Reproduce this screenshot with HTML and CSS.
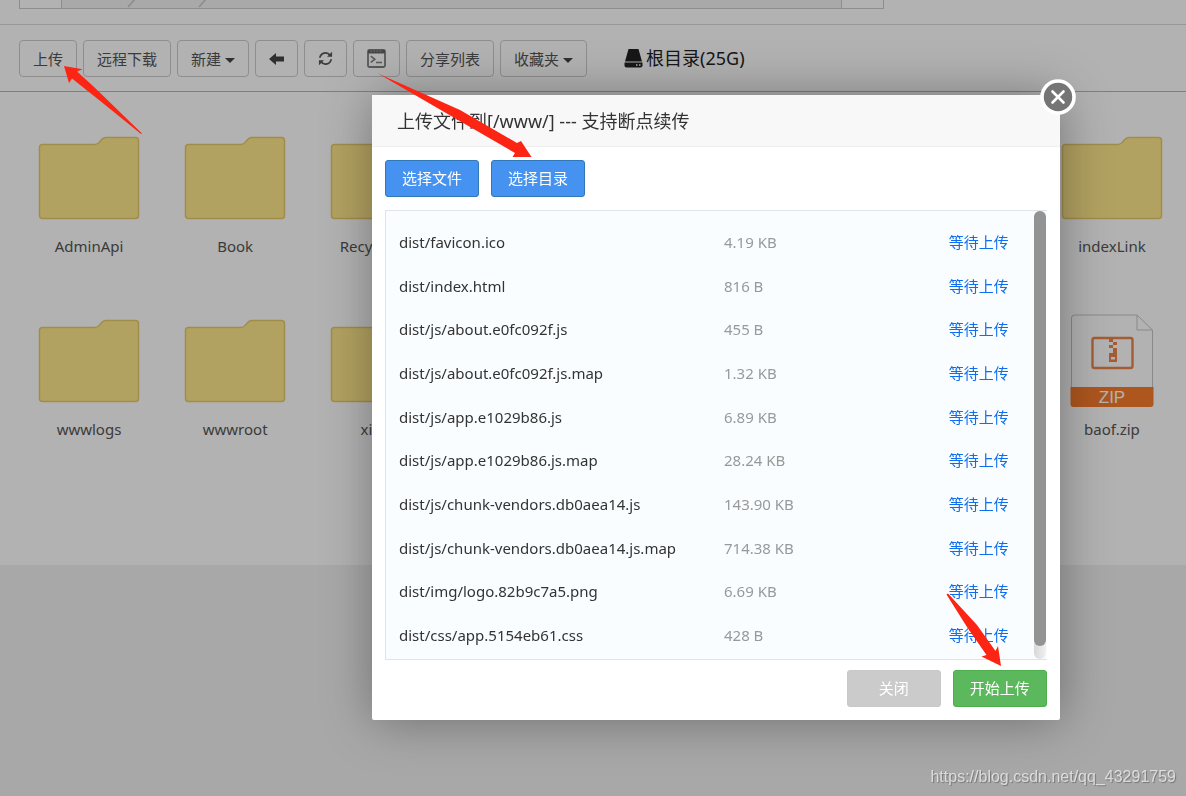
FILE: index.html
```html
<!DOCTYPE html>
<html lang="zh-CN">
<head>
<meta charset="utf-8">
<title>文件管理</title>
<link rel="stylesheet" href="styles.css">
</head>
<body>
<svg class="defs" aria-hidden="true">
  <symbol id="folder" viewBox="0 0 102 84">
    <path d="M4.500 8.500H57c3 0 3.500-1 5-3 2-2.800 3-4 6-4h29.500q3 0 3 3v75q0 3-3 3h-93q-3 0-3-3v-68q0-3 3-3z" fill="#ffe98c" stroke="#e6ca6a" stroke-width="1.500"/>
  </symbol>
</svg>
<main class="page">
  <div class="pathbar">
    <div class="path">
      <span class="path-end"></span>
      <span class="path-mid">
        <svg width="160" height="8" viewBox="0 0 160 8"><path d="M73 -1L66 7M144 -1L137 7" stroke="#c8c8c8" stroke-width="1.500" fill="none"/></svg>
      </span>
      <span class="path-end"></span>
    </div>
  </div>
  <div class="toolbar">
    <button class="tool">上传</button>
    <button class="tool">远程下载</button>
    <button class="tool">新建<i class="caret"></i></button>
    <button class="tool" aria-label="后退"><svg width="15" height="14" viewBox="0 0 15 14"><path d="M0 7l7-6V4.500h8v5H7V13z" fill="#444"/></svg></button>
    <button class="tool" aria-label="刷新"><svg width="15" height="15" viewBox="0 0 16 16"><g fill="none" stroke="#555" stroke-width="1.900"><path d="M2 7.200A6 6 0 0 1 12.800 4.500"/><path d="M14 8.800A6 6 0 0 1 3.200 11.500"/></g><path d="M15 .8v5.400H9.600zM1 15.200V9.800h5.400z" fill="#555"/></svg></button>
    <button class="tool" aria-label="终端"><svg width="19" height="19" viewBox="0 0 19 19"><rect x="1" y="1" width="17" height="17" rx="1.500" fill="none" stroke="#808080" stroke-width="1.800"/><path d="M1 1h17v3.500H1z" fill="#666"/><path d="M3.500 2h1.500M6.500 2H8M9.500 2H11M12.500 2H14" stroke="#aaa"/><path d="M3.800 7.200l4 3.100-4 3.100M9 13.500h6" fill="none" stroke="#808080" stroke-width="1.600"/></svg></button>
    <button class="tool">分享列表</button>
    <button class="tool">收藏夹<i class="caret"></i></button>
    <div class="disk">
      <svg width="19" height="19" viewBox="0 0 19 19"><path d="M4.500 0h10l3.500 12.500H1z" fill="#222"/><path d="M.5 13.500h18v3q0 2-2 2h-14q-2 0-2-2z" fill="#222"/><path d="M12 16h1.500M15 16h1.500" stroke="#fff" stroke-width="1.500"/></svg>
      <span>根目录(25G)</span>
    </div>
  </div>
  <div class="files">
    <div class="file"><div class="thumb"><svg width="102" height="84"><use href="#folder"/></svg></div><div class="caption">AdminApi</div></div>
    <div class="file"><div class="thumb"><svg width="102" height="84"><use href="#folder"/></svg></div><div class="caption">Book</div></div>
    <div class="file partial"><div class="thumb"><svg width="102" height="84"><use href="#folder"/></svg></div><div class="caption">Recy</div></div>
    <div class="file last"><div class="thumb"><svg width="102" height="84"><use href="#folder"/></svg></div><div class="caption">indexLink</div></div>
    <div class="file"><div class="thumb"><svg width="102" height="84"><use href="#folder"/></svg></div><div class="caption">wwwlogs</div></div>
    <div class="file"><div class="thumb"><svg width="102" height="84"><use href="#folder"/></svg></div><div class="caption">wwwroot</div></div>
    <div class="file partial"><div class="thumb"><svg width="102" height="84"><use href="#folder"/></svg></div><div class="caption">xi</div></div>
    <div class="file last"><div class="thumb">
      <svg width="84" height="94" viewBox="0 0 84 94">
        <path d="M1.500 74V4q0-3 3-3H67l15.500 15v58z" fill="#fff" stroke="#c4c4c4"/>
        <path d="M67 1v15h15.500" fill="none" stroke="#c4c4c4"/>
        <path d="M.5 73h83v17q0 3-3 3h-77q-3 0-3-3z" fill="#f87c2c"/>
        <rect x="22.500" y="24" width="40" height="30" rx="2" fill="none" stroke="#ec8448" stroke-width="2.400"/>
        <path d="M39 25h4v3h-4zM43 28h4v3h-4zM39 31h4v3h-4zM43 34h4v3h-4zM39 39h4v-2h4v11h-8z" fill="#ec8448"/>
        <path d="M41 43h4v2.500h-4z" fill="#fff"/>
        <text x="42" y="89" text-anchor="middle" class="zip-label">ZIP</text>
      </svg></div><div class="caption">baof.zip</div></div>
  </div>
</main>
<div class="shade"></div>
<section class="dialog" role="dialog" aria-labelledby="dlg-title">
  <header class="dialog-head"><h1 id="dlg-title">上传文件到[/www/] --- 支持断点续传</h1></header>
  <button class="close" aria-label="关闭窗口"><svg width="36" height="36" viewBox="0 0 36 36"><circle cx="18" cy="18" r="16" fill="#757575" stroke="#fff" stroke-width="3.600"/><path d="M12.500 12.500l11 11M23.500 12.500l-11 11" stroke="#fff" stroke-width="2.600" stroke-linecap="round"/></svg></button>
  <div class="dialog-body">
    <div class="pick"><button class="btn primary">选择文件</button><button class="btn primary">选择目录</button></div>
    <div class="list">
      <table class="uploads">
        <tr><td>dist/favicon.ico</td><td class="size">4.19 KB</td><td class="state">等待上传</td></tr>
        <tr><td>dist/index.html</td><td class="size">816 B</td><td class="state">等待上传</td></tr>
        <tr><td>dist/js/about.e0fc092f.js</td><td class="size">455 B</td><td class="state">等待上传</td></tr>
        <tr><td>dist/js/about.e0fc092f.js.map</td><td class="size">1.32 KB</td><td class="state">等待上传</td></tr>
        <tr><td>dist/js/app.e1029b86.js</td><td class="size">6.89 KB</td><td class="state">等待上传</td></tr>
        <tr><td>dist/js/app.e1029b86.js.map</td><td class="size">28.24 KB</td><td class="state">等待上传</td></tr>
        <tr><td>dist/js/chunk-vendors.db0aea14.js</td><td class="size">143.90 KB</td><td class="state">等待上传</td></tr>
        <tr><td>dist/js/chunk-vendors.db0aea14.js.map</td><td class="size">714.38 KB</td><td class="state">等待上传</td></tr>
        <tr><td>dist/img/logo.82b9c7a5.png</td><td class="size">6.69 KB</td><td class="state">等待上传</td></tr>
        <tr><td>dist/css/app.5154eb61.css</td><td class="size">428 B</td><td class="state">等待上传</td></tr>
      </table>
      <div class="track"><div class="bar"></div></div>
    </div>
    <div class="actions"><button class="btn muted">关闭</button><button class="btn success">开始上传</button></div>
  </div>
</section>
<svg class="arrows" width="1010" height="670" viewBox="0 0 1010 670" aria-hidden="true">
  <g fill="#fc2412">
    <path d="M64 66l18.500 3.300-5.500 2.200 16 14.500 49 47.500-1 .5L99 100 72 78.500 69 83z"/>
    <path d="M378 73.500L460 110l57 33 4-2 10.500 16H512.500l2.500-4L458 120z"/>
    <path d="M946.500 594.500l1.500-1L977 625l18.500 26 2.500-5 3 20-19.500-9.500 5-1.500L967 627z"/>
  </g>
</svg>
<div class="watermark">https://blog.csdn.net/qq_43291759</div>
</body>
</html>
```
FILE: styles.css
```css
* { box-sizing: border-box; }
body {
  margin: 0;
  min-height: 100vh;
  background: #f1f1f1;
  color: #555;
  font: 15px/20px "Noto Sans", "Noto Sans CJK SC", sans-serif;
  overflow: hidden;
}
button { font: inherit; cursor: pointer; }
svg { display: block; flex: none; }
.defs { position: absolute; width: 0; height: 0; }
.page { background: #fff; }

.pathbar { padding: 0 302px 15px 19px; border-bottom: 1px solid #dadada; }
.path { display: flex; height: 9px; border: 1px solid #ccc; border-top: 0; }
.path-end { width: 41px; }
.path-mid { flex: 1; background: #f3f3f3; border: solid #ccc; border-width: 0 1px; }

.toolbar {
  display: flex;
  gap: 6px;
  padding: 15px 19px 14px;
  border-bottom: 1px solid #b7b7b7;
}
.tool {
  display: flex;
  align-items: center;
  height: 37px;
  padding: 0 13px;
  border: 1px solid #ccc;
  border-radius: 4px;
  background: none;
  color: #555;
}
.caret {
  margin: 3px 0 0 4px;
  border: 5px solid transparent;
  border-top-color: #444;
  border-bottom: 0;
}
.disk {
  display: flex;
  align-items: center;
  gap: 3px;
  height: 36px;
  margin-left: 31px;
  color: #222;
  font-size: 18px;
}

.files {
  display: grid;
  grid-template-columns: repeat(auto-fill, 146px);
  justify-content: space-between;
  row-gap: 47px;
  padding: 39px 1px 115px 16px;
}
.last { grid-column-end: -1; }
.thumb { display: flex; align-items: center; justify-content: center; height: 94px; }
.caption { line-height: 42px; text-align: center; }
.partial .caption { padding-right: 82px; text-align: right; }
.zip-label { font: 17px "Liberation Sans", sans-serif; fill: #fff; }

.shade { position: fixed; inset: 0; background: rgba(0, 0, 0, .3); }

.dialog {
  position: absolute;
  top: 95px;
  left: 372px;
  width: 58%;
  border-radius: 2px;
  background: #fff;
  box-shadow: 1px 1px 50px rgba(0, 0, 0, .35);
  color: #333;
}
.dialog-head { padding: 2px 25px 0; border-bottom: 1px solid #eee; background: #f8f8f8; }
.dialog-head h1 { margin: 0; font-size: 18px; font-weight: 400; line-height: 49px; }
.close {
  position: absolute;
  top: -16px;
  right: -16px;
  padding: 0;
  border: 0;
  background: none;
}
.dialog-body { padding: 13px; }
.pick { display: flex; gap: 12px; }
.btn {
  min-width: 94px;
  height: 37px;
  padding: 0 15px 2px;
  border: 1px solid;
  border-radius: 3px;
  color: #fff;
}
.primary { background: #4592f0; border-color: #3079b8; }
.muted { background: #cbcbcb; border-color: #c8c8c8; }
.success { background: #5cb85c; border-color: #4cae4c; }
.list {
  display: flex;
  margin: 13px 0 10px;
  border: 1px solid #e0e4e8;
  border-right: 0;
  background: #fafdff;
}
.uploads {
  flex: 1;
  height: 437px;
  margin: 9px 0 2px;
  border-collapse: collapse;
  table-layout: fixed;
}
.uploads td { padding: 0 0 0 13px; white-space: nowrap; }
.uploads .size { width: 170px; color: #999; }
.uploads .state { width: 153px; padding: 0 25px 0 0; color: #0d6ef0; text-align: right; }
.uploads td:first-child { width: 325px; }
.track {
  width: 12px;
  margin-right: 1px;
  border-radius: 6px;
  background: linear-gradient(90deg, #d8d8d8, #f0f0f0);
}
.bar { height: 97%; border-radius: 6px; background: #929392; }
.actions { display: flex; justify-content: flex-end; gap: 12px; }

.arrows { position: absolute; top: 0; left: 0; pointer-events: none; }
.watermark {
  position: fixed;
  right: 10px;
  bottom: 9px;
  color: rgba(255, 255, 255, .65);
  font: 16px/20px "Liberation Sans", Arial, sans-serif;
  text-shadow: 1px 1px 1px rgba(0, 0, 0, .3);
}
```
